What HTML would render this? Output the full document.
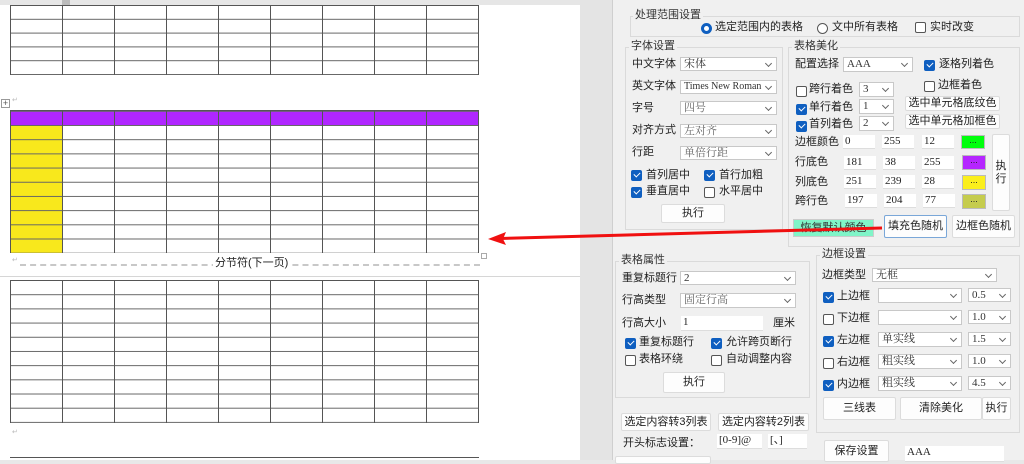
<!DOCTYPE html>
<html><head><meta charset="utf-8"><style>
*{margin:0;padding:0;box-sizing:border-box}
body{width:1024px;height:460px;overflow:hidden;position:relative;background:#e8e8e8;font-family:"Liberation Sans","Noto Sans CJK SC",sans-serif;font-size:11px;color:#222}
.a{position:absolute}
#doc{left:0;top:0;width:580px;height:460px;background:#fff}
.grid{position:absolute;border-left:1px solid #555;border-top:1px solid #555;
background-image:linear-gradient(to right,transparent 51px,#555 51px,#555 52px),linear-gradient(to bottom,transparent calc(var(--rh) - 1px),#666 calc(var(--rh) - 1px));
background-size:52px 100%,100% var(--rh)}
.rm{position:absolute;color:#bbb;font-size:7px}
#panel{left:612px;top:0;width:412px;height:460px;background:#f0f0f0;border-left:1px solid #cfcfcf}
.grp{position:absolute;border:1px solid #dadada}
.gt{position:absolute;background:#f0f0f0;padding:0 2px;font-size:11px;color:#333;line-height:12px}
.lb{position:absolute;font-size:11px;line-height:13px;color:#222}
.cb{position:absolute;width:11px;height:11px;border:1px solid #555;border-radius:2px;background:#fff}
.cb.on{background:#0f5fc0;border-color:#0f5fc0}
.cb.on::after{content:"";position:absolute;left:2px;top:1px;width:5px;height:3px;border-left:1.5px solid #fff;border-bottom:1.5px solid #fff;transform:rotate(-45deg)}
.cmb{position:absolute;background:#fff;border:1px solid #c8c8c8;font-family:"Liberation Serif","Noto Serif CJK SC",serif;font-size:11px;line-height:12px;padding-left:3px;color:#333}
.cmb::after{content:"";position:absolute;right:5px;top:3px;width:4px;height:4px;border-right:1px solid #666;border-bottom:1px solid #666;transform:rotate(45deg)}
.cmb.g{color:#666}
.in{position:absolute;background:#fff;border-bottom:1px solid #ddd;font-family:"Liberation Serif",serif;font-size:11px;line-height:13px;padding-left:2px}
.bt{position:absolute;background:#fdfdfd;border:1px solid #dcdcdc;border-radius:2px;text-align:center;font-size:11px;color:#222}
.sw{position:absolute;border:1px solid #bbb;text-align:center;font-size:9px;line-height:9px;color:#222}
</style></head><body>
<div id="doc" class="a">
 <div class="a" style="left:0;top:0;width:580px;height:5px;background:#e6e6e6"></div>
 <div class="a" style="left:62px;top:0;width:8px;height:5px;background:#bbb"></div>
 <div class="grid" style="--rh:13.8px;left:10px;top:5px;width:469px;height:70px"></div>
 <div class="a" style="left:1px;top:99px;width:9px;height:9px;border:1px solid #999;font-size:9px;line-height:7px;text-align:center;color:#555">+</div>
 <div class="a" style="left:10px;top:110px;width:469px;height:15px;background:#b026ff"></div>
 <div class="a" style="left:10px;top:125px;width:52px;height:128px;background:#f8e81c"></div>
 <div class="grid" style="--rh:14.2px;left:10px;top:110px;width:469px;height:143px;background-position:0 0,0 0.8px"></div>
 <div class="a" style="left:481px;top:253px;width:6px;height:6px;border:1px solid #aaa"></div>
 <div class="a" style="left:20px;top:264px;width:460px;height:0;border-top:2px dashed #c8c8c8"></div>
 <div class="a" style="left:213px;top:257px;background:#fff;padding:0 2px;font-size:11px;line-height:13px">分节符(下一页)</div>
 <div class="a" style="left:0;top:276px;width:580px;height:1px;background:#d6d6d6"></div>
 <div class="grid" style="--rh:14.2px;left:10px;top:280px;width:469px;height:143px"></div>
 <div class="rm" style="left:12px;top:428px">↵</div>
 <div class="a" style="left:10px;top:457px;width:469px;height:3px;border-top:1px solid #555"></div>
 <div class="rm" style="left:12px;top:96px">↵</div>
 <div class="rm" style="left:12px;top:256px">↵</div>
</div>
<div class="a" style="left:580px;top:0;width:32px;height:460px;background:#e4e4e4"></div>
<div id="panel" class="a"></div>

<div class="grp" style="left:630px;top:16px;width:390px;height:21px"></div>
<div class="gt" style="left:633px;top:9px">处理范围设置</div>
<div class="a" style="left:701px;top:23px;width:11px;height:11px;border-radius:50%;border:3px solid #0f5fc0;background:#fff"></div>
<div class="lb" style="left:715px;top:21px">选定范围内的表格</div>
<div class="a" style="left:817px;top:23px;width:11px;height:11px;border-radius:50%;border:1px solid #555;background:#fff"></div>
<div class="lb" style="left:832px;top:21px">文中所有表格</div>
<div class="cb" style="left:915px;top:22px"></div>
<div class="lb" style="left:930px;top:21px">实时改变</div>

<div class="grp" style="left:625px;top:47px;width:158px;height:183px"></div>
<div class="gt" style="left:629px;top:40px">字体设置</div>
<div class="lb" style="left:632px;top:58px">中文字体</div><div class="cmb" style="left:680px;top:57px;width:97px;height:14px">宋体</div>
<div class="lb" style="left:632px;top:80px">英文字体</div><div class="cmb" style="left:680px;top:80px;width:97px;height:14px;font-size:10px">Times New Roman</div>
<div class="lb" style="left:632px;top:102px">字号</div><div class="cmb g" style="left:680px;top:101px;width:97px;height:14px">四号</div>
<div class="lb" style="left:632px;top:124px">对齐方式</div><div class="cmb g" style="left:680px;top:124px;width:97px;height:14px">左对齐</div>
<div class="lb" style="left:632px;top:146px">行距</div><div class="cmb g" style="left:680px;top:146px;width:97px;height:14px">单倍行距</div>
<div class="cb on" style="left:631px;top:170px"></div><div class="lb" style="left:646px;top:169px">首列居中</div>
<div class="cb on" style="left:704px;top:170px"></div><div class="lb" style="left:719px;top:169px">首行加粗</div>
<div class="cb on" style="left:631px;top:187px"></div><div class="lb" style="left:646px;top:185px">垂直居中</div>
<div class="cb" style="left:704px;top:187px"></div><div class="lb" style="left:719px;top:185px">水平居中</div>
<div class="bt" style="left:661px;top:204px;width:64px;height:19px;line-height:17px">执行</div>

<div class="grp" style="left:788px;top:47px;width:232px;height:200px"></div>
<div class="gt" style="left:792px;top:40px">表格美化</div>
<div class="lb" style="left:795px;top:58px">配置选择</div><div class="cmb" style="left:843px;top:57px;width:70px;height:15px">AAA</div>
<div class="cb on" style="left:924px;top:60px"></div><div class="lb" style="left:939px;top:58px">逐格列着色</div>
<div class="cb" style="left:924px;top:81px"></div><div class="lb" style="left:938px;top:79px">边框着色</div>
<div class="cb" style="left:796px;top:86px"></div><div class="lb" style="left:809px;top:83px">跨行着色</div><div class="cmb" style="left:859px;top:82px;width:35px;height:15px">3</div>
<div class="cb on" style="left:796px;top:104px"></div><div class="lb" style="left:809px;top:101px">单行着色</div><div class="cmb" style="left:859px;top:99px;width:35px;height:15px">1</div>
<div class="cb on" style="left:796px;top:121px"></div><div class="lb" style="left:809px;top:118px">首列着色</div><div class="cmb" style="left:859px;top:116px;width:35px;height:15px">2</div>
<div class="bt" style="left:905px;top:96px;width:95px;height:15px;line-height:13px">选中单元格底纹色</div>
<div class="bt" style="left:905px;top:114px;width:95px;height:15px;line-height:13px">选中单元格加框色</div>
<div class="lb" style="left:795px;top:136px">边框颜色</div>
<div class="in" style="left:843px;top:135px;width:32px;height:14px">0</div><div class="in" style="left:882px;top:135px;width:32px;height:14px">255</div><div class="in" style="left:922px;top:135px;width:32px;height:14px">12</div>
<div class="sw" style="left:961px;top:135px;width:24px;height:14px;background:#00ff0c">...</div>
<div class="lb" style="left:795px;top:156px">行底色</div>
<div class="in" style="left:844px;top:156px;width:32px;height:14px">181</div><div class="in" style="left:883px;top:156px;width:32px;height:14px">38</div><div class="in" style="left:922px;top:156px;width:32px;height:14px">255</div>
<div class="sw" style="left:962px;top:155px;width:24px;height:15px;background:#b526ff">...</div>
<div class="lb" style="left:795px;top:176px">列底色</div>
<div class="in" style="left:844px;top:175px;width:32px;height:14px">251</div><div class="in" style="left:883px;top:175px;width:32px;height:14px">239</div><div class="in" style="left:922px;top:175px;width:32px;height:14px">28</div>
<div class="sw" style="left:962px;top:175px;width:24px;height:15px;background:#fbef1c">...</div>
<div class="lb" style="left:795px;top:195px">跨行色</div>
<div class="in" style="left:845px;top:194px;width:32px;height:14px">197</div><div class="in" style="left:884px;top:194px;width:32px;height:14px">204</div><div class="in" style="left:923px;top:194px;width:32px;height:14px">77</div>
<div class="sw" style="left:962px;top:194px;width:24px;height:15px;background:#c5cc4d">...</div>
<div class="bt" style="left:992px;top:134px;width:18px;height:77px;padding-top:25px;line-height:13px">执<br>行</div>
<div class="a" style="left:793px;top:219px;width:81px;height:18px;background:#80f5c8;border:1px solid #ccc;text-align:center;line-height:16px;color:#333">恢复默认颜色</div>
<div class="bt" style="left:884px;top:215px;width:63px;height:23px;line-height:21px;border-color:#7aa7d8">填充色随机</div>
<div class="bt" style="left:952px;top:215px;width:63px;height:23px;line-height:21px">边框色随机</div>

<div class="grp" style="left:615px;top:261px;width:195px;height:137px"></div>
<div class="gt" style="left:619px;top:254px">表格属性</div>
<div class="lb" style="left:622px;top:272px">重复标题行</div><div class="cmb" style="left:680px;top:271px;width:116px;height:14px">2</div>
<div class="lb" style="left:622px;top:294px">行高类型</div><div class="cmb g" style="left:680px;top:293px;width:116px;height:15px">固定行高</div>
<div class="lb" style="left:622px;top:317px">行高大小</div><div class="in" style="left:681px;top:316px;width:82px;height:15px">1</div><div class="lb" style="left:773px;top:317px">厘米</div>
<div class="cb on" style="left:625px;top:338px"></div><div class="lb" style="left:639px;top:336px">重复标题行</div>
<div class="cb on" style="left:711px;top:338px"></div><div class="lb" style="left:726px;top:336px">允许跨页断行</div>
<div class="cb" style="left:625px;top:355px"></div><div class="lb" style="left:639px;top:353px">表格环绕</div>
<div class="cb" style="left:711px;top:355px"></div><div class="lb" style="left:726px;top:353px">自动调整内容</div>
<div class="bt" style="left:663px;top:372px;width:62px;height:21px;line-height:19px">执行</div>
<div class="bt" style="left:621px;top:413px;width:90px;height:18px;line-height:16px">选定内容转3列表</div>
<div class="bt" style="left:718px;top:413px;width:91px;height:18px;line-height:16px">选定内容转2列表</div>
<div class="lb" style="left:623px;top:437px">开头标志设置：</div>
<div class="in" style="left:717px;top:434px;width:45px;height:15px">[0-9]@</div>
<div class="in" style="left:768px;top:434px;width:39px;height:15px">[、]</div>
<div class="bt" style="left:615px;top:456px;width:96px;height:8px"></div>

<div class="grp" style="left:816px;top:255px;width:204px;height:178px"></div>
<div class="gt" style="left:820px;top:248px">边框设置</div>
<div class="lb" style="left:822px;top:269px">边框类型</div><div class="cmb" style="left:872px;top:268px;width:125px;height:14px">无框</div>
<div class="cb on" style="left:823px;top:292px"></div><div class="lb" style="left:837px;top:290px">上边框</div><div class="cmb" style="left:878px;top:288px;width:84px;height:15px"></div><div class="cmb" style="left:968px;top:288px;width:43px;height:14px">0.5</div>
<div class="cb" style="left:823px;top:314px"></div><div class="lb" style="left:837px;top:312px">下边框</div><div class="cmb" style="left:878px;top:310px;width:84px;height:15px"></div><div class="cmb" style="left:968px;top:310px;width:43px;height:14px">1.0</div>
<div class="cb on" style="left:823px;top:336px"></div><div class="lb" style="left:837px;top:334px">左边框</div><div class="cmb" style="left:878px;top:332px;width:84px;height:15px">单实线</div><div class="cmb" style="left:968px;top:332px;width:43px;height:14px">1.5</div>
<div class="cb" style="left:823px;top:358px"></div><div class="lb" style="left:837px;top:356px">右边框</div><div class="cmb" style="left:878px;top:354px;width:84px;height:15px">粗实线</div><div class="cmb" style="left:968px;top:354px;width:43px;height:14px">1.0</div>
<div class="cb on" style="left:823px;top:380px"></div><div class="lb" style="left:837px;top:378px">内边框</div><div class="cmb" style="left:878px;top:376px;width:84px;height:15px">粗实线</div><div class="cmb" style="left:968px;top:376px;width:43px;height:14px">4.5</div>
<div class="bt" style="left:823px;top:397px;width:73px;height:23px;line-height:21px">三线表</div>
<div class="bt" style="left:900px;top:397px;width:82px;height:23px;line-height:21px">清除美化</div>
<div class="bt" style="left:982px;top:397px;width:29px;height:23px;line-height:21px">执行</div>
<div class="bt" style="left:824px;top:440px;width:65px;height:22px;line-height:20px">保存设置</div>
<div class="in" style="left:905px;top:446px;width:99px;height:16px">AAA</div>

<svg class="a" style="left:0;top:0" width="1024" height="460">
 <line x1="500" y1="238.5" x2="882" y2="228" stroke="#f01010" stroke-width="3"/>
 <polygon points="488,239 506,232 503,239 506,245" fill="#f01010"/>
</svg>
</body></html>
